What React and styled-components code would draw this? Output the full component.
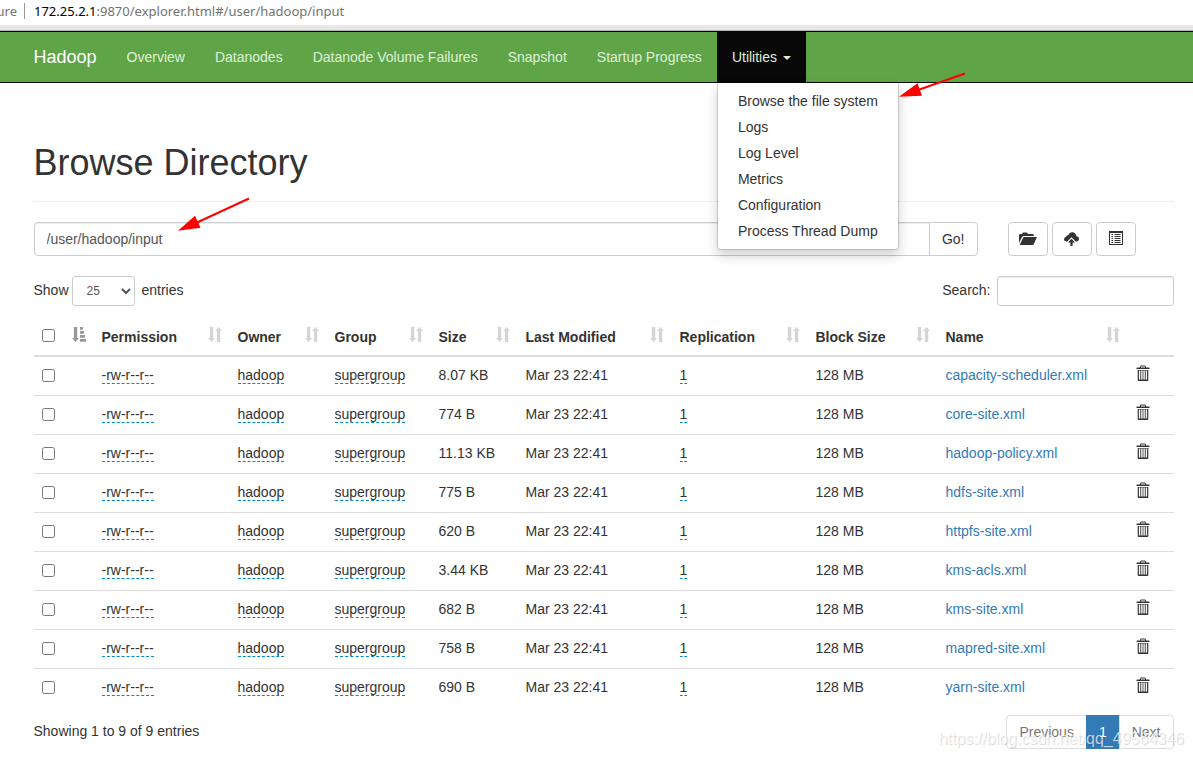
import { useState } from 'react';
import styled, { createGlobalStyle } from 'styled-components';

const navLinks = ['Overview', 'Datanodes', 'Datanode Volume Failures', 'Snapshot', 'Startup Progress'];

const utilities = [
  'Browse the file system',
  'Logs',
  'Log Level',
  'Metrics',
  'Configuration',
  'Process Thread Dump',
];

const columns = [
  { label: 'Permission', width: 136 },
  { label: 'Owner', width: 97 },
  { label: 'Group', width: 104 },
  { label: 'Size', width: 87 },
  { label: 'Last Modified', width: 154 },
  { label: 'Replication', width: 136 },
  { label: 'Block Size', width: 130 },
  { label: 'Name', width: 190 },
];

const files = [
  { name: 'capacity-scheduler.xml', size: '8.07 KB' },
  { name: 'core-site.xml', size: '774 B' },
  { name: 'hadoop-policy.xml', size: '11.13 KB' },
  { name: 'hdfs-site.xml', size: '775 B' },
  { name: 'httpfs-site.xml', size: '620 B' },
  { name: 'kms-acls.xml', size: '3.44 KB' },
  { name: 'kms-site.xml', size: '682 B' },
  { name: 'mapred-site.xml', size: '758 B' },
  { name: 'yarn-site.xml', size: '690 B' },
];

const GlobalStyle = createGlobalStyle`
  *, *::before, *::after {
    box-sizing: border-box;
  }

  body {
    margin: 0;
    background: #fff;
    color: #333;
    font: 14px/20px 'Liberation Sans', Arial, sans-serif;
  }

  button, input, select {
    font: inherit;
    color: inherit;
  }

  a {
    color: #337ab7;
    text-decoration: none;
  }
`;

const Page = styled.div`
  position: relative;
  overflow-x: clip;
`;

const AddressBar = styled.div`
  display: flex;
  align-items: center;
  height: 31px;
  padding-bottom: 9px;
  background: linear-gradient(#fff 25px, #e8e8e7 25px, #e8e8e7 30px, #b4b4b2 30px);
  color: #737373;
  font-family: 'Noto Sans', sans-serif;
  font-size: 13px;
  white-space: nowrap;
`;

const Security = styled.span`
  display: flex;
  justify-content: flex-end;
  width: 25px;
  height: 16px;
  padding-right: 7px;
  margin-right: 9px;
  border-right: 1px solid #999;
  line-height: 16px;
  overflow: hidden;
`;

const Host = styled.span`
  color: #000;
`;

const Container = styled.div`
  max-width: 1140px;
  margin: 0 auto;
`;

const Navbar = styled.nav`
  padding-left: 14px;
  border: solid #080808;
  border-width: 1px 0;
  background: #5fa548;
`;

const NavRow = styled(Container)`
  display: flex;
`;

const Brand = styled.a`
  padding: 15px 15px 15px 0;
  color: #fff;
  font-size: 18px;
`;

const NavList = styled.ul`
  display: flex;
  margin: 0;
  padding: 0;
  list-style: none;
`;

const NavItem = styled.li`
  position: relative;
`;

const NavLink = styled.a`
  display: flex;
  align-items: center;
  gap: 6px;
  padding: 15px;
  background: ${({ $open }) => ($open ? '#080808' : 'transparent')};
  color: #dff0d8;
  white-space: nowrap;
`;

const Caret = styled.span`
  border: 4px solid transparent;
  border-top-color: currentColor;
  border-bottom: 0;
  margin-top: 2px;
`;

const Menu = styled.ul`
  position: absolute;
  top: 100%;
  left: 0;
  z-index: 2;
  margin: 0;
  padding: 5px 0;
  border: 1px solid rgba(0, 0, 0, 0.15);
  border-radius: 0 0 4px 4px;
  background: #fff;
  background-clip: padding-box;
  box-shadow: 0 6px 12px rgba(0, 0, 0, 0.175);
  list-style: none;
`;

const MenuLink = styled.a`
  display: block;
  padding: 3px 20px;
  color: #333;
  white-space: nowrap;
`;

const Main = styled.main`
  padding: 60px 0 8px 14px;
`;

const Title = styled.h1`
  margin: 0 0 20px;
  padding-bottom: 18px;
  border-bottom: 1px solid #eee;
  font-size: 36px;
  font-weight: 500;
  line-height: 40px;
`;

const Toolbar = styled.div`
  display: flex;
  margin-bottom: 20px;
`;

const PathForm = styled.form`
  display: flex;
  flex: 1;
  margin-right: 30px;
`;

const PathInput = styled.input`
  flex: 1;
  min-width: 0;
  height: 34px;
  padding: 6px 12px;
  border: 1px solid #ccc;
  border-radius: 4px 0 0 4px;
  box-shadow: inset 0 1px 1px rgba(0, 0, 0, 0.075);
  background: #fff;
  color: #555;
`;

const Button = styled.button`
  height: 34px;
  padding: 6px 12px;
  border: 1px solid #ccc;
  border-radius: 4px;
  background: #fff;
`;

const GoButton = styled(Button)`
  margin-left: -1px;
  border-radius: 0 4px 4px 0;
`;

const Actions = styled.div`
  display: flex;
  gap: 4px;
  margin-right: 38px;
`;

const IconButton = styled(Button)`
  display: flex;
  align-items: center;
  justify-content: center;
  width: 40px;
  padding: 0;
`;

const Controls = styled.div`
  display: flex;
  justify-content: space-between;
  margin-bottom: 13px;
`;

const Field = styled.label`
  display: flex;
  gap: ${({ $gap }) => $gap}px;
  line-height: 28px;
`;

const LengthSelect = styled.select`
  width: 63px;
  height: 30px;
  padding: 5px 10px;
  border: 1px solid #ccc;
  border-radius: 3px;
  background: #fff;
  color: #555;
  font-size: 12px;
`;

const SearchInput = styled.input`
  width: 177px;
  height: 30px;
  padding: 5px 10px;
  border: 1px solid #ccc;
  border-radius: 3px;
  box-shadow: inset 0 1px 1px rgba(0, 0, 0, 0.075);
  font-size: 12px;
`;

const Table = styled.table`
  width: 100%;
  border-spacing: 0;
  table-layout: fixed;
  margin-bottom: 8px;
`;

const HeadCell = styled.th`
  padding: 8px;
  border-bottom: 2px solid #ddd;
  text-align: left;
  vertical-align: top;
  white-space: nowrap;
`;

const HeadContent = styled.div`
  display: flex;
  justify-content: space-between;
  align-items: flex-start;
`;

const Row = styled.tr`
  height: 39px;

  &:first-child {
    height: 38px;
  }

  & + & > td {
    border-top: 1px solid #ddd;
  }
`;

const Cell = styled.td`
  padding: 8px;
  vertical-align: top;
  white-space: nowrap;
`;

const Checkbox = styled.input`
  display: block;
  width: 13px;
  height: 13px;
  margin: ${({ $head }) => ($head ? 2 : 4)}px 0 0;
`;

const Editable = styled.a`
  border-bottom: 1px dashed #08c;
  color: #333;
`;

const TrashButton = styled.button`
  display: block;
  padding: 0;
  border: 0;
  background: none;
`;

const Icon = styled.svg`
  display: block;
  flex: none;
  fill: currentColor;
  opacity: ${({ $opacity }) => $opacity || 1};
`;

const Footer = styled.div`
  display: flex;
  justify-content: space-between;
`;

const Info = styled.div`
  padding-top: 6px;
`;

const Pagination = styled.div`
  display: flex;
`;

const PageLink = styled.a`
  height: 34px;
  margin-left: -1px;
  padding: 6px 12px;
  border: 1px solid ${({ $active }) => ($active ? '#337ab7' : '#ddd')};
  background: ${({ $active }) => ($active ? '#337ab7' : '#fff')};
  color: ${({ $active }) => ($active ? '#fff' : '#777')};

  &:first-child {
    border-radius: 4px 0 0 4px;
  }

  &:last-child {
    border-radius: 0 4px 4px 0;
  }
`;

const Watermark = styled.div`
  position: absolute;
  right: 9px;
  bottom: 8px;
  z-index: 3;
  color: rgba(255, 255, 255, 0.7);
  font-size: 16px;
  text-shadow: 1px 1px 1px rgba(0, 0, 0, 0.16);
  pointer-events: none;
`;

const Annotations = styled.svg`
  position: absolute;
  top: 0;
  left: 0;
  z-index: 3;
  pointer-events: none;
`;

// end of styled

const SortIcon = () => (
  <Icon width="14" height="15" viewBox="0 0 14 15" $opacity={0.2}>
    <path d="M1.900 0h3.300v11H7l-3.500 4L0 11h1.900zM8.900 15h3.300V4H14l-3.500-4L7 4h1.900z" />
  </Icon>
);

const SortAscIcon = () => (
  <Icon width="14" height="15" viewBox="0 0 14 15" $opacity={0.5}>
    <path d="M1.900 0h3.300v11H7l-3.500 4L0 11h1.900zM8 0h3v2.800H8zM8 4h4v2.800H8zM8 8h5v2.800H8zM8 12h6v2.800H8z" />
  </Icon>
);

const FolderIcon = () => (
  <Icon width="18" height="14" viewBox="0 0 18 14">
    <path d="M0 11V3l1-1h2l1-1.500h4L9 2h5l.8.800V4H4.300L3 5z" />
    <path d="M4.500 5H18l-3.600 8H.6z" />
  </Icon>
);

const CloudIcon = () => (
  <Icon width="15" height="14" viewBox="0 0 15 14">
    <path d="M2.500 9.500C1 9.500 0 8.600 0 7.300 0 6 1 5.200 2.100 5 2.300 3.800 3.200 3.200 4.300 3.300 5 1.200 6.500.2 8.300.2c2.300 0 4 1.700 4.100 4 1.500 0 2.600 1.100 2.600 2.600s-1.100 2.700-2.500 2.700h-.8L7.500 5.200 3.300 9.500z" />
    <path d="M7.500 6.800l3.500 3.700H8.600V14H6.400v-3.500H4z" />
  </Icon>
);

const ListIcon = () => (
  <Icon width="14" height="16" viewBox="0 0 14 16">
    <path fillRule="evenodd" d="M0 0h14v14H0zM1 2v11h12V2z" />
    <path d="M2.500 3H4v1H2.500zM2.500 5H4v1H2.500zM2.500 7H4v1H2.500zM2.500 9H4v1H2.500zM2.500 11H4v1H2.500zM5.500 3h6v1h-6zM5.500 5h6v1h-6zM5.500 7h6v1h-6zM5.500 9h6v1h-6zM5.500 11h6v1h-6z" />
  </Icon>
);

const TrashIcon = () => (
  <Icon width="14" height="16" viewBox="0 0 14 16">
    <path
      fillRule="evenodd"
      d="M.5 4V3l.6-.6H4V1.500L5 .5h4l1 1v.9h3l.5.600v1zM5 2.400h4v-.8H5zM1.700 5h10.600v10.200l-.6.800H2.300l-.6-.8zM2.900 5.500v9h1.400v-9zM5.200 5.500v9h1.400v-9zM7.400 5.500v9h1.400v-9zM9.700 5.500v9h1.400v-9z"
    />
  </Icon>
);

const FileRow = ({ file, checked, onToggle }) => (
  <Row>
    <Cell>
      <Checkbox type="checkbox" aria-label={file.name} checked={checked} onChange={onToggle} />
    </Cell>
    <Cell><Editable href="#">-rw-r--r--</Editable></Cell>
    <Cell><Editable href="#">hadoop</Editable></Cell>
    <Cell><Editable href="#">supergroup</Editable></Cell>
    <Cell>{file.size}</Cell>
    <Cell>Mar 23 22:41</Cell>
    <Cell><Editable href="#">1</Editable></Cell>
    <Cell>128 MB</Cell>
    <Cell><a href="#">{file.name}</a></Cell>
    <Cell>
      <TrashButton type="button" aria-label={`Delete ${file.name}`}>
        <TrashIcon />
      </TrashButton>
    </Cell>
  </Row>
);

function App() {
  const [path, setPath] = useState('/user/hadoop/input');
  const [search, setSearch] = useState('');
  const [selected, setSelected] = useState([]);
  const [menuOpen, setMenuOpen] = useState(true);

  const visible = files.filter((file) => file.name.includes(search));

  const toggle = (name) => {
    setSelected(
      selected.includes(name) ? selected.filter((item) => item !== name) : [...selected, name]
    );
  };

  const toggleAll = (e) => {
    setSelected(e.target.checked ? files.map((file) => file.name) : []);
  };

  return (
    <Page>
      <GlobalStyle />

      <AddressBar>
        <Security>ure</Security>
        <Host>172.25.2.1</Host>
        <span>:9870/explorer.html#/user/hadoop/input</span>
      </AddressBar>

      <Navbar>
        <NavRow>
          <Brand href="#">Hadoop</Brand>
          <NavList>
            {navLinks.map((label) => (
              <NavItem key={label}>
                <NavLink href="#">{label}</NavLink>
              </NavItem>
            ))}
            <NavItem>
              <NavLink
                href="#"
                $open={menuOpen}
                aria-expanded={menuOpen}
                onClick={() => setMenuOpen(!menuOpen)}
              >
                Utilities
                <Caret />
              </NavLink>
              {menuOpen && (
                <Menu>
                  {utilities.map((label) => (
                    <li key={label}>
                      <MenuLink href="#">{label}</MenuLink>
                    </li>
                  ))}
                </Menu>
              )}
            </NavItem>
          </NavList>
        </NavRow>
      </Navbar>

      <Main>
        <Container>
          <Title>Browse Directory</Title>

          <Toolbar>
            <PathForm onSubmit={(e) => e.preventDefault()}>
              <PathInput
                type="text"
                aria-label="Directory"
                value={path}
                onChange={(e) => setPath(e.target.value)}
              />
              <GoButton type="submit">Go!</GoButton>
            </PathForm>
            <Actions>
              <IconButton type="button" aria-label="Create directory"><FolderIcon /></IconButton>
              <IconButton type="button" aria-label="Upload files"><CloudIcon /></IconButton>
              <IconButton type="button" aria-label="Cut and paste"><ListIcon /></IconButton>
            </Actions>
          </Toolbar>

          <Controls>
            <Field $gap={3}>
              Show
              <LengthSelect defaultValue="25">
                <option>25</option>
                <option>50</option>
                <option>100</option>
              </LengthSelect>
              <span>&nbsp;entries</span>
            </Field>
            <Field $gap={6}>
              Search:
              <SearchInput type="search" value={search} onChange={(e) => setSearch(e.target.value)} />
            </Field>
          </Controls>

          <Table>
            <colgroup>
              <col width="60" />
              {columns.map((column) => (
                <col key={column.label} width={column.width} />
              ))}
              <col width="46" />
            </colgroup>
            <thead>
              <tr>
                <HeadCell>
                  <HeadContent>
                    <Checkbox
                      type="checkbox"
                      aria-label="Select all"
                      $head
                      checked={selected.length === files.length}
                      onChange={toggleAll}
                    />
                    <SortAscIcon />
                  </HeadContent>
                </HeadCell>
                {columns.map((column) => (
                  <HeadCell key={column.label}>
                    <HeadContent>
                      {column.label}
                      <SortIcon />
                    </HeadContent>
                  </HeadCell>
                ))}
                <HeadCell />
              </tr>
            </thead>
            <tbody>
              {visible.map((file) => (
                <FileRow
                  key={file.name}
                  file={file}
                  checked={selected.includes(file.name)}
                  onToggle={() => toggle(file.name)}
                />
              ))}
            </tbody>
          </Table>

          <Footer>
            <Info>Showing 1 to {visible.length} of {visible.length} entries</Info>
            <Pagination>
              <PageLink href="#">Previous</PageLink>
              <PageLink href="#" $active>1</PageLink>
              <PageLink href="#">Next</PageLink>
            </Pagination>
          </Footer>
        </Container>
      </Main>

      <Annotations width="980" height="240" viewBox="0 0 980 240" fill="#f00" stroke="#f00">
        <path d="M965 73.500L918 90M249 198.500L197 222.500" strokeWidth="2" />
        <path d="M899 96.700l18.500-13.500 4.500 12.500zM178 230.800l17-15 5.500 12z" stroke="none" />
      </Annotations>

      <Watermark>https://blog.csdn.net/qq_49564346</Watermark>
    </Page>
  );
}

export default App;
